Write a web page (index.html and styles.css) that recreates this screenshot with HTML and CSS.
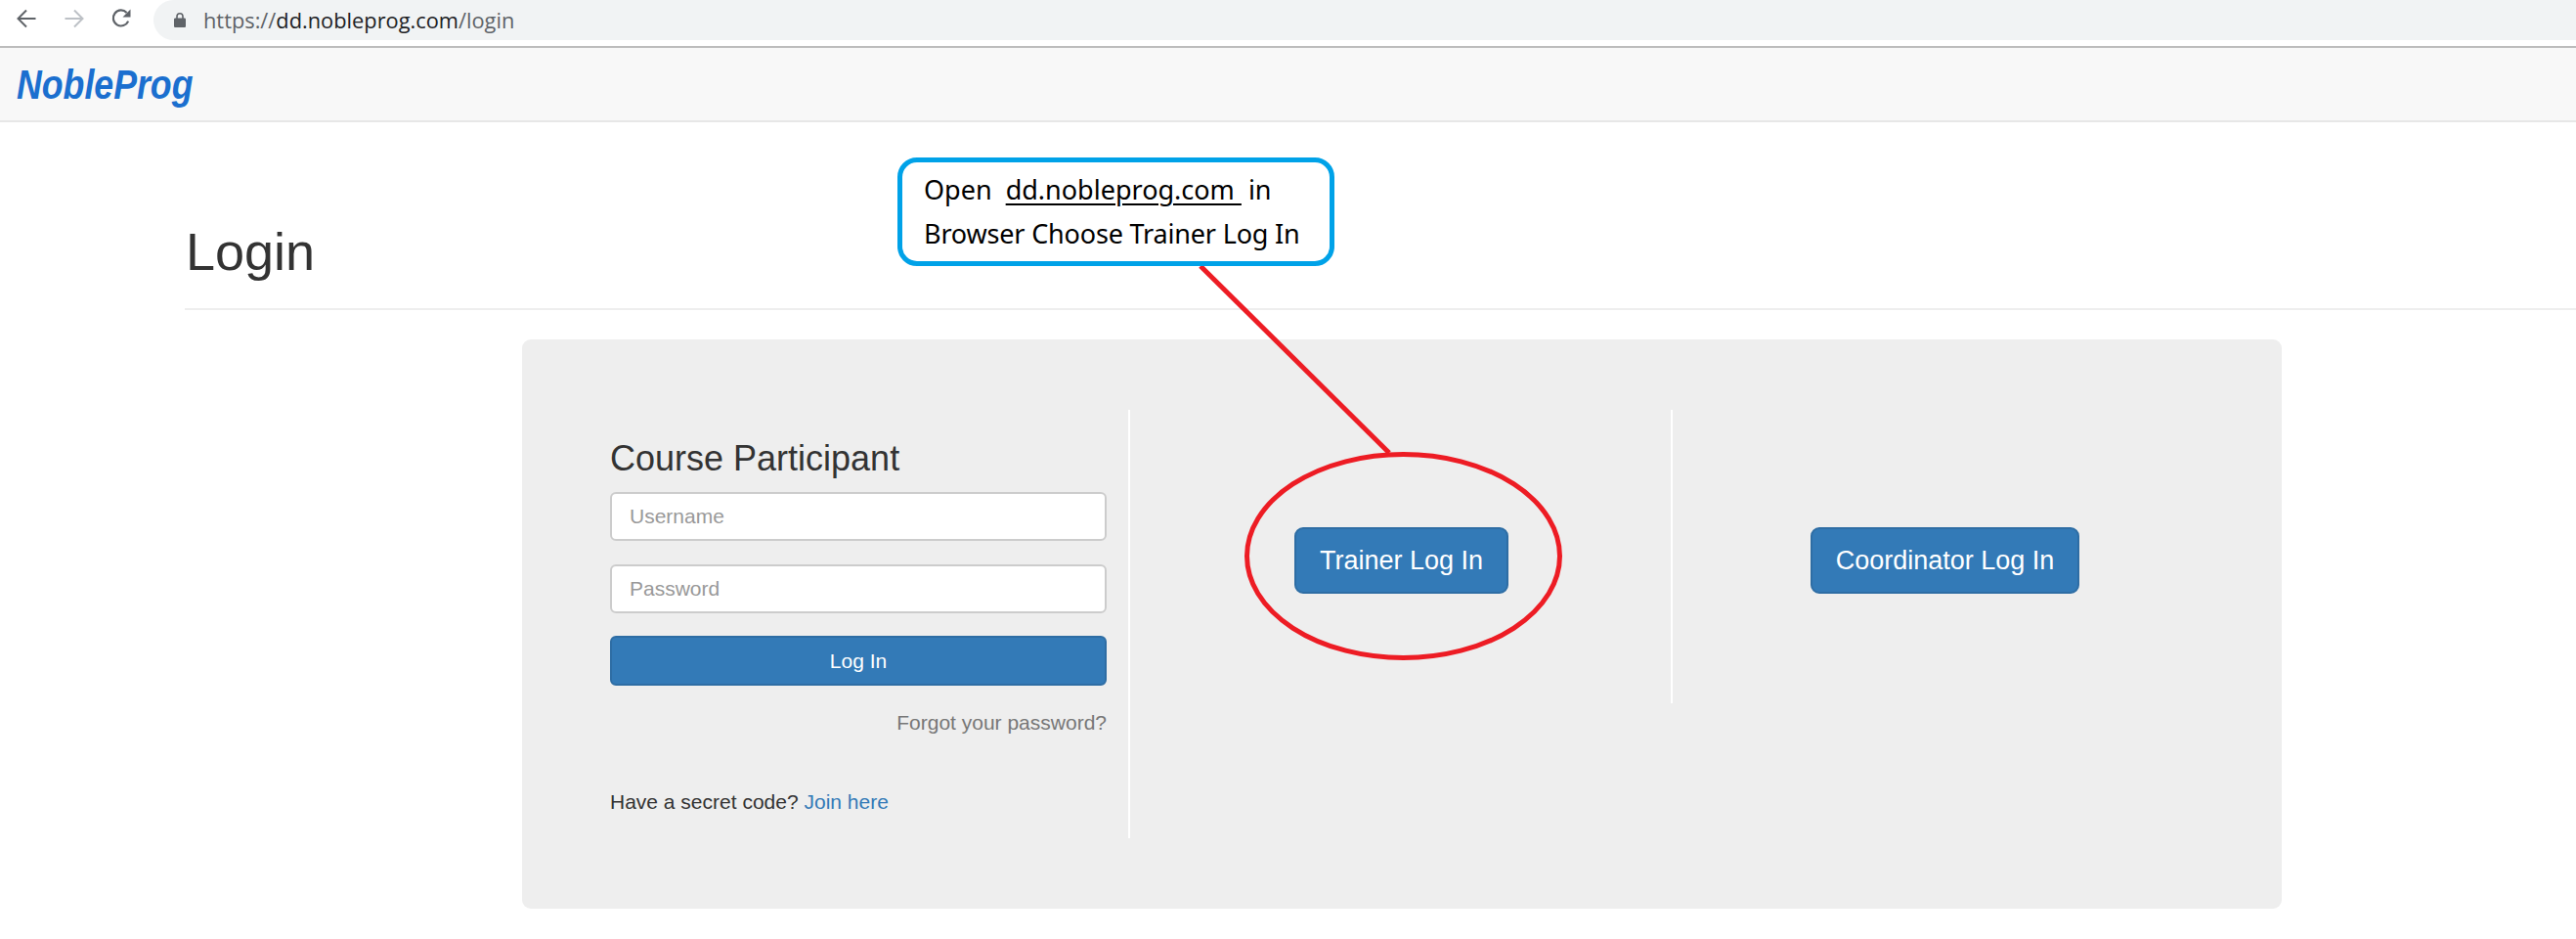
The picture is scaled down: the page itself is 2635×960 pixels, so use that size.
FILE: index.html
```html
<!DOCTYPE html>
<html lang="en">
<head>
<meta charset="utf-8">
<title>Login</title>
<link rel="stylesheet" href="styles.css">
</head>
<body>
<header class="toolbar">
  <svg class="tool-icon back" viewBox="0 0 20 20" width="20" height="20"><path d="M19.500 10H1.500M10 1.500L1.500 10l8.500 8.500" fill="none" stroke="#5f6368" stroke-width="2"/></svg>
  <svg class="tool-icon forward" viewBox="0 0 20 20" width="20" height="20"><path d="M.5 10h18M10 1.500l8.500 8.500-8.500 8.500" fill="none" stroke="#bdc1c6" stroke-width="2"/></svg>
  <svg class="tool-icon reload" viewBox="0 0 20 20" width="20" height="20"><path d="M17.200 12.600A8 8 0 1 1 15.600 3.900" fill="none" stroke="#5f6368" stroke-width="2.200"/><path d="M19.500 .5v8h-8z" fill="#5f6368"/></svg>
  <div class="omnibox">
    <svg class="lock" viewBox="0 0 12 15" width="12" height="15"><path d="M1.300 5.500h9.400c.7 0 1.300.6 1.300 1.300v6.900c0 .7-.6 1.300-1.300 1.300H1.300C.6 15 0 14.400 0 13.700V6.800c0-.7.6-1.300 1.300-1.300z" fill="#5f6368"/><path d="M3 6V3.800a3 3 0 0 1 6 0V6" fill="none" stroke="#5f6368" stroke-width="1.600"/></svg>
    <span class="url"><span class="url-dim">https://</span>dd.nobleprog.com<span class="url-dim">/login</span></span>
  </div>
</header>
<nav class="navbar"><span class="brand">NobleProg</span></nav>
<main class="page">
  <h1 class="title">Login</h1>
  <div class="panel">
    <section class="col col-login">
      <h3 class="col-heading">Course Participant</h3>
      <input class="field" type="text" placeholder="Username">
      <input class="field field-last" type="password" placeholder="Password">
      <button class="btn btn-block" type="button">Log In</button>
      <p class="forgot">Forgot your password?</p>
      <p class="secret">Have a secret code? <a class="join" href="#">Join here</a></p>
    </section>
    <section class="col col-action">
      <button class="btn btn-large" type="button">Trainer Log In</button>
    </section>
    <section class="col col-last">
      <button class="btn btn-large" type="button">Coordinator Log In</button>
    </section>
  </div>
</main>
<svg class="markup" width="2635" height="960" viewBox="0 0 2635 960">
  <path d="M1228 272L1421 463" stroke="#ed1c24" stroke-width="5" fill="none"/>
  <ellipse cx="1435.500" cy="568.500" rx="160" ry="104" stroke="#ed1c24" stroke-width="5" fill="none"/>
</svg>
<aside class="callout">
  <div>Open &nbsp;<span class="callout-link">dd.nobleprog.com&nbsp;</span> in</div>
  <div class="callout-second">Browser Choose Trainer Log In</div>
</aside>
</body>
</html>
```
FILE: styles.css
```css
* { box-sizing: border-box; }
html, body { margin: 0; padding: 0; }
body {
  width: 2635px;
  height: 960px;
  overflow: hidden;
  background: #fff;
  font-family: "Liberation Sans", Arial, sans-serif;
  color: #333;
  position: relative;
}
.toolbar {
  height: 49px;
  display: flex;
  align-items: flex-start;
  background: #fff;
  border-bottom: 2px solid #bcbcbc;
}
.tool-icon { flex: none; margin-top: 9px; }
.back { margin-left: 17px; }
.forward { margin-left: 29px; }
.reload { margin-left: 28px; }
.omnibox {
  flex: 1;
  height: 41px;
  margin-left: 23px;
  padding-left: 21px;
  display: flex;
  align-items: center;
  background: #f1f3f4;
  border-radius: 21px 0 0 21px;
}
.lock { flex: none; }
.url {
  margin-left: 18px;
  font-family: "Open Sans", sans-serif;
  font-size: 21.800px;
  color: #202124;
}
.url-dim { color: #5f6368; }
.navbar {
  height: 76px;
  padding: 1px 0 0 17px;
  display: flex;
  align-items: center;
  background: #f8f8f8;
  border-bottom: 2px solid #e7e7e7;
}
.brand {
  font-size: 43px;
  font-weight: bold;
  font-style: italic;
  color: #1b6fcf;
  transform: scaleX(.83);
  transform-origin: left center;
}
.page { padding-left: 189px; }
.title {
  margin: 0;
  height: 192px;
  padding: 102px 0 0 1px;
  font-size: 54px;
  font-weight: normal;
  line-height: 60px;
  border-bottom: 2px solid #eee;
}
.panel {
  width: 1800px;
  height: 582px;
  margin: 30px 0 0 345px;
  padding: 72px 67px;
  display: grid;
  grid-template-columns: repeat(3, 555px);
  align-items: start;
  background: #eee;
  border-radius: 9px;
}
.col { padding: 0 23px; }
.col-login { height: 438px; padding-right: 22px; border-right: 2px solid #fff; }
.col-action { height: 300px; border-right: 2px solid #fff; }
.col-action, .col-last {
  display: flex;
  justify-content: center;
  padding-top: 120px;
  padding-left: 25px;
}
.col-heading {
  margin: 30px 0 14px;
  font-size: 36px;
  font-weight: normal;
  line-height: 40px;
}
.field {
  display: block;
  width: 100%;
  height: 50px;
  margin-bottom: 24px;
  padding: 0 18px;
  font-family: inherit;
  font-size: 21px;
  color: #555;
  background: #fff;
  border: 2px solid #ccc;
  border-radius: 6px;
}
.field-last { margin-bottom: 23px; }
.field::placeholder { color: #999; opacity: 1; }
.btn {
  font-family: inherit;
  color: #fff;
  background: #337ab7;
  border: 2px solid #2e6da4;
  border-radius: 6px;
}
.btn-block {
  display: block;
  width: 100%;
  height: 51px;
  font-size: 21px;
}
.btn-large {
  height: 68px;
  padding: 0 24px;
  font-size: 27px;
  border-radius: 9px;
}
.forgot {
  margin: 23px 0 0;
  font-size: 21px;
  line-height: 30px;
  text-align: right;
  color: #777;
}
.secret {
  margin: 51px 0 0;
  font-size: 21px;
  line-height: 30px;
}
.join { color: #337ab7; text-decoration: none; }
.markup { position: absolute; left: 0; top: 0; pointer-events: none; }
.callout {
  position: absolute;
  left: 918px;
  top: 161px;
  width: 447px;
  height: 111px;
  padding: 5px 0 0 22px;
  font-family: "Noto Sans", "Open Sans", sans-serif;
  font-size: 27px;
  line-height: 45px;
  color: #000;
  background: #fff;
  border: 5px solid #00a2e8;
  border-radius: 20px;
}
.callout-link { text-decoration: underline; text-underline-offset: 4px; text-decoration-thickness: 2px; }
.callout-second { letter-spacing: -.17px; }
```
